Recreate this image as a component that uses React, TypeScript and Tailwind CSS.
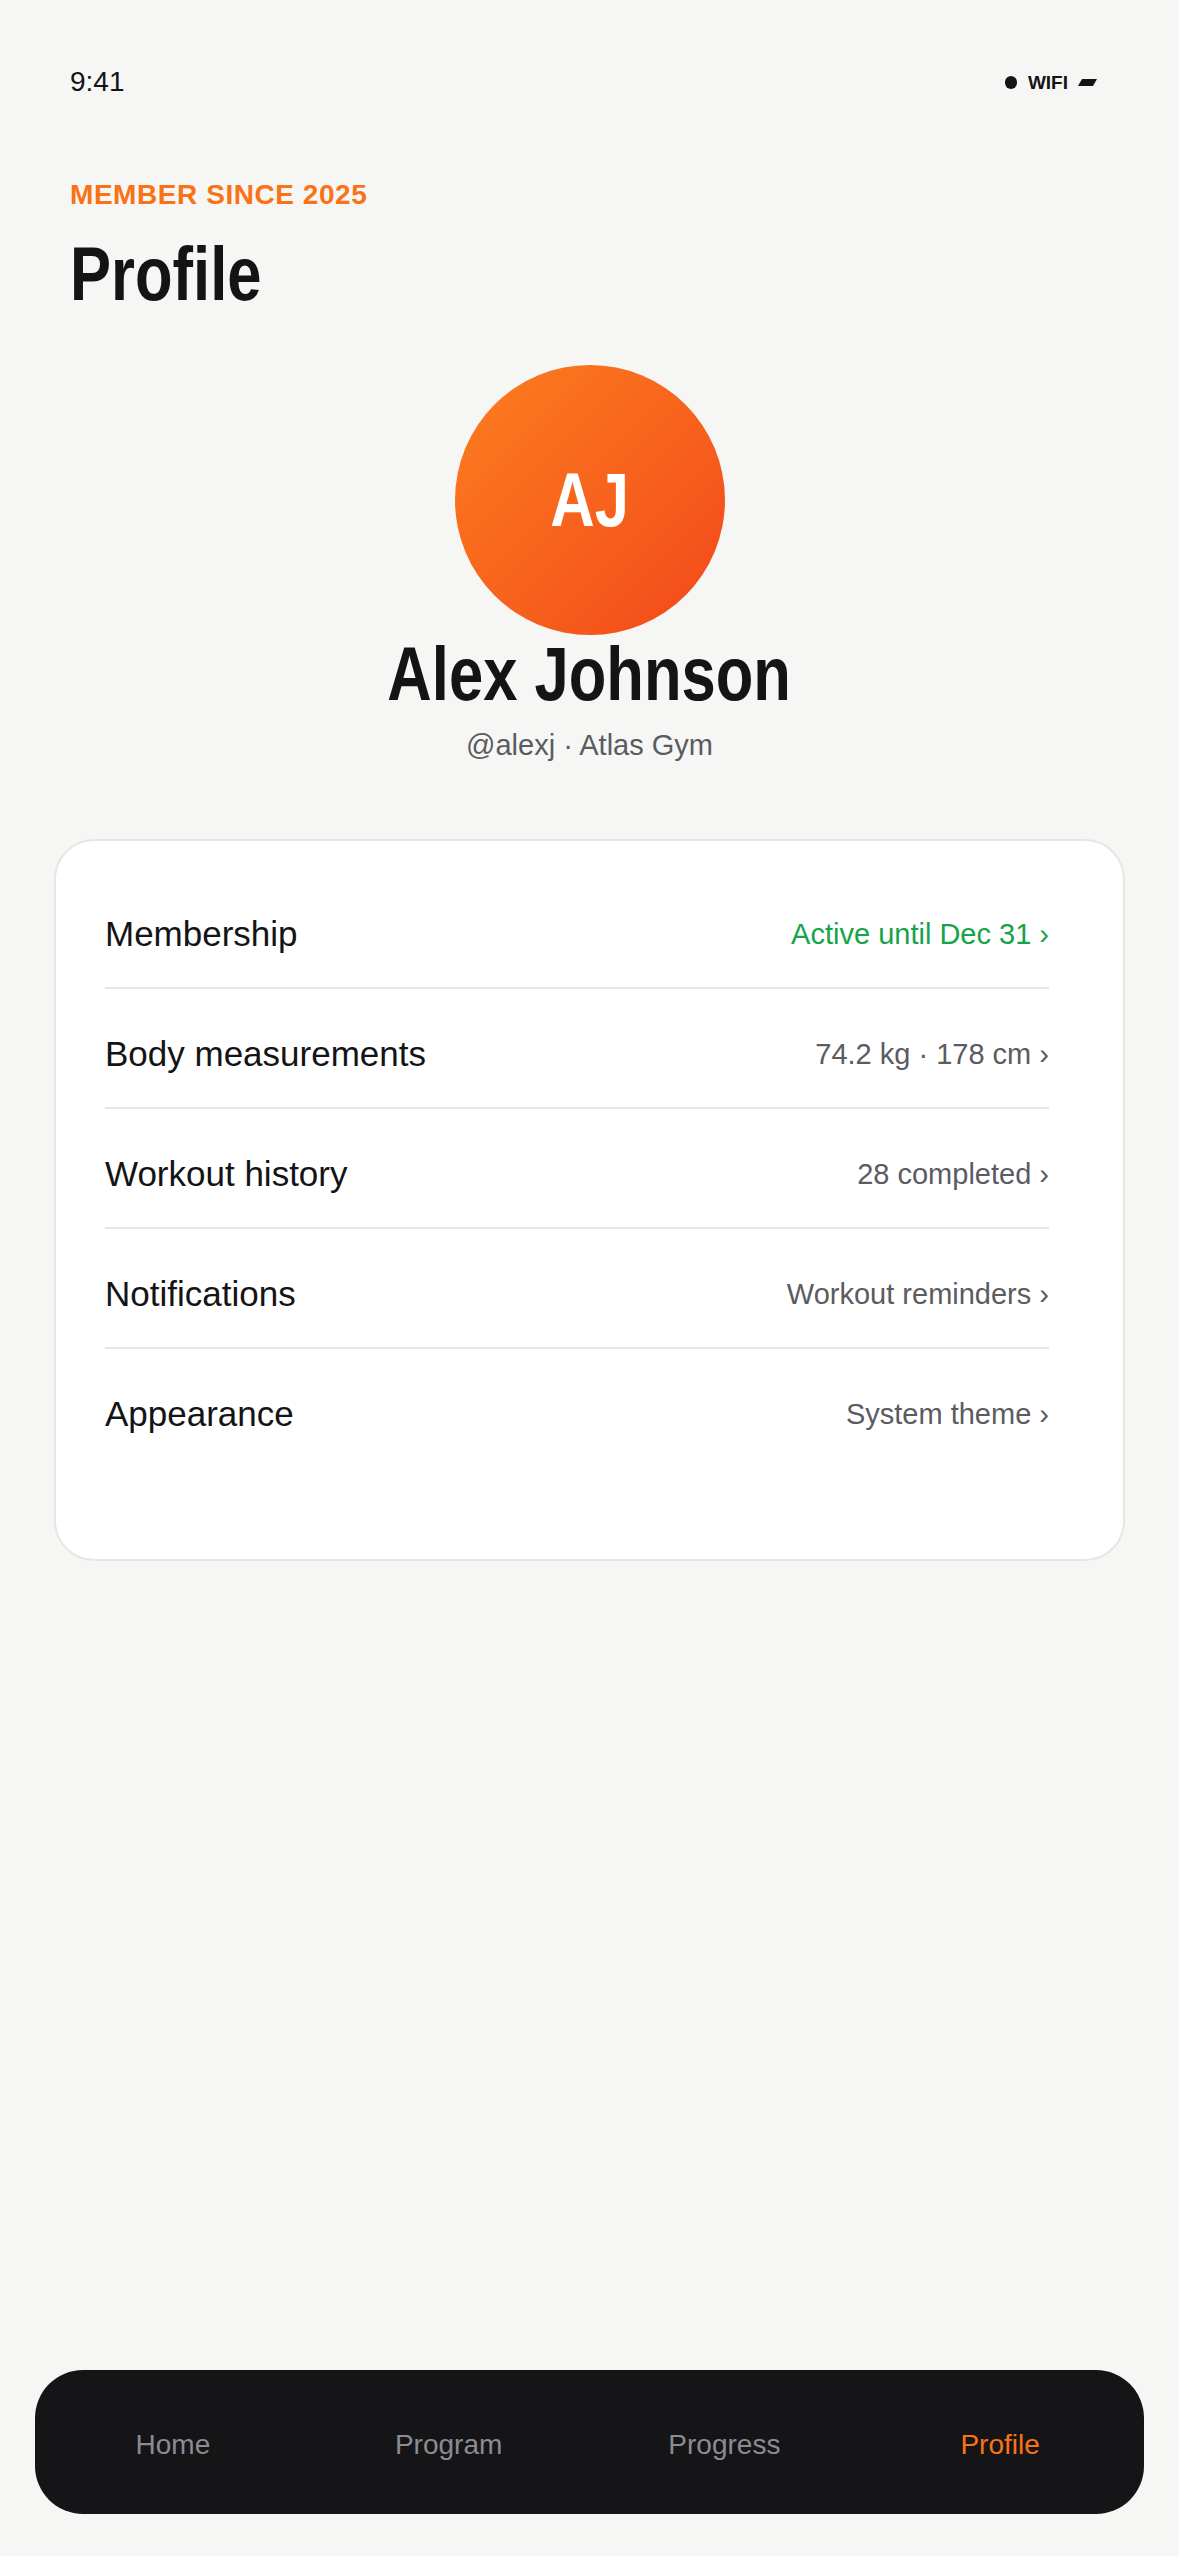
import { useState } from 'react';

const rows = [
  { label: 'Membership', value: 'Active until Dec 31', accent: true },
  { label: 'Body measurements', value: '74.2 kg · 178 cm', accent: false },
  { label: 'Workout history', value: '28 completed', accent: false },
  { label: 'Notifications', value: 'Workout reminders', accent: false },
  { label: 'Appearance', value: 'System theme', accent: false },
];

const tabs = ['Home', 'Program', 'Progress', 'Profile'];

export default function App() {
  const [active, setActive] = useState('Profile');

  return (
    <div className="min-h-screen bg-[#f6f6f4] flex flex-col font-['Liberation_Sans',Arial,sans-serif] text-[#141416]">
      {/* status bar */}
      <div className="mt-[65px] h-[34px] pl-[70px] pr-[84px] flex items-center justify-between">
        <span className="text-[28px] leading-[34px]">9:41</span>
        <div className="flex items-center">
          <span className="w-[12px] h-[13px] rounded-full bg-[#141416]" />
          <span className="ml-[11px] text-[19px] font-bold leading-none">WIFI</span>
          <span className="ml-[12px] w-[15px] h-[7px] bg-[#141416] -skew-x-[30deg]" />
        </div>
      </div>

      {/* header */}
      <div className="px-[70px] mt-[79px]">
        <p className="text-[28px] leading-[34px] font-bold tracking-[0.02em] text-[#f97316]">
          MEMBER SINCE 2025
        </p>
        <h1 className="mt-[24px] text-[76px] leading-[76px] font-bold">
          <span className="inline-block origin-left scale-x-[0.81]">Profile</span>
        </h1>
      </div>

      {/* avatar */}
      <div className="mt-[53px] flex flex-col items-center">
        <div className="w-[270px] h-[270px] rounded-full bg-gradient-to-br from-[#fc7d1f] to-[#f2461a] flex items-center justify-center">
          <span className="inline-block text-[76px] leading-none font-bold text-white scale-x-[0.81]">
            AJ
          </span>
        </div>
        <h2 className="mt-px text-[76px] leading-[76px] font-bold">
          <span className="inline-block scale-x-[0.81]">Alex Johnson</span>
        </h2>
        <p className="mt-[16px] text-[29px] leading-[34px] text-[#5b5b62]">@alexj · Atlas Gym</p>
      </div>

      {/* settings card */}
      <div className="mx-[54px] mt-[77px] bg-white border-2 border-[#e6e6e2] rounded-[40px] pl-[49px] pr-[74px] pt-[28px] pb-[92px]">
        {rows.map((row, i) => (
          <div
            key={row.label}
            className={`flex items-center justify-between pt-[45px] pb-[33px] ${
              i < rows.length - 1 ? 'border-b-2 border-[#e6e6e2]' : ''
            }`}
          >
            <span className="text-[35px] leading-[40px]">{row.label}</span>
            <span
              className={`text-[29px] leading-[34px] ${
                row.accent ? 'text-[#16a34a]' : 'text-[#5b5b62]'
              }`}
            >
              {row.value} ›
            </span>
          </div>
        ))}
      </div>

      {/* tab bar */}
      <nav className="mt-auto mx-[35px] mb-[42px] h-[144px] rounded-[48px] bg-[#151517] grid grid-cols-4 items-center pr-[6px] pt-[5px]">
        {tabs.map((tab) => (
          <button
            key={tab}
            onClick={() => setActive(tab)}
            className={`text-[28px] leading-[34px] text-center ${
              active === tab ? 'text-[#f97316]' : 'text-[#8b8b92]'
            }`}
          >
            {tab}
          </button>
        ))}
      </nav>
    </div>
  );
}
